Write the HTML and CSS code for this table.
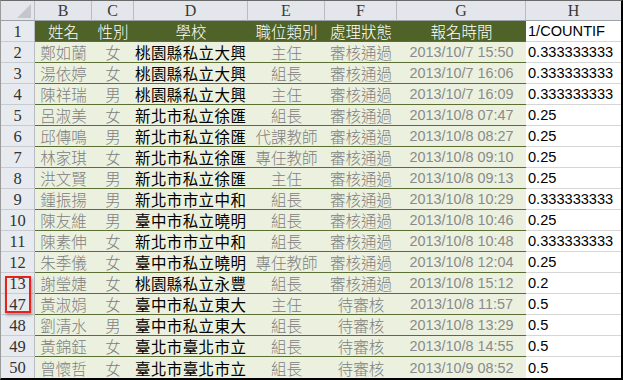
FILE: index.html
```html
<!DOCTYPE html>
<html>
<head>
<meta charset="utf-8">
<link rel="stylesheet" href="styles.css">
</head>
<body>
<div class="sheet">
  <div class="row colhdr">
    <div class="corner"><span class="tri"></span></div>
    <div class="ch">B</div><div class="ch">C</div><div class="ch">D</div><div class="ch">E</div><div class="ch">F</div><div class="ch">G</div><div class="ch">H</div>
  </div>
  <div class="row head">
    <div class="rh">1</div>
    <div class="c hd">姓名</div><div class="c hd">性別</div><div class="c hd">學校</div><div class="c hd">職位類別</div><div class="c hd">處理狀態</div><div class="c hd">報名時間</div><div class="c h">1/COUNTIF</div>
  </div>
  <div class="row"><div class="rh">2</div><div class="c g">鄭如蘭</div><div class="c g">女</div><div class="c s">桃園縣私立大興</div><div class="c g">主任</div><div class="c g">審核通過</div><div class="c d">2013/10/7 15:50</div><div class="c h">0.333333333</div></div>
  <div class="row"><div class="rh">3</div><div class="c g">湯依婷</div><div class="c g">女</div><div class="c s">桃園縣私立大興</div><div class="c g">組長</div><div class="c g">審核通過</div><div class="c d">2013/10/7 16:06</div><div class="c h">0.333333333</div></div>
  <div class="row"><div class="rh">4</div><div class="c g">陳祥瑞</div><div class="c g">男</div><div class="c s">桃園縣私立大興</div><div class="c g">主任</div><div class="c g">審核通過</div><div class="c d">2013/10/7 16:09</div><div class="c h">0.333333333</div></div>
  <div class="row"><div class="rh">5</div><div class="c g">呂淑美</div><div class="c g">女</div><div class="c s">新北市私立徐匯</div><div class="c g">組長</div><div class="c g">審核通過</div><div class="c d">2013/10/8 07:47</div><div class="c h">0.25</div></div>
  <div class="row"><div class="rh">6</div><div class="c g">邱傳鳴</div><div class="c g">男</div><div class="c s">新北市私立徐匯</div><div class="c g">代課教師</div><div class="c g">審核通過</div><div class="c d">2013/10/8 08:27</div><div class="c h">0.25</div></div>
  <div class="row"><div class="rh">7</div><div class="c g">林家琪</div><div class="c g">女</div><div class="c s">新北市私立徐匯</div><div class="c g">專任教師</div><div class="c g">審核通過</div><div class="c d">2013/10/8 09:10</div><div class="c h">0.25</div></div>
  <div class="row"><div class="rh">8</div><div class="c g">洪文賢</div><div class="c g">男</div><div class="c s">新北市私立徐匯</div><div class="c g">主任</div><div class="c g">審核通過</div><div class="c d">2013/10/8 09:13</div><div class="c h">0.25</div></div>
  <div class="row"><div class="rh">9</div><div class="c g">鍾振揚</div><div class="c g">男</div><div class="c s">新北市市立中和</div><div class="c g">組長</div><div class="c g">審核通過</div><div class="c d">2013/10/8 10:29</div><div class="c h">0.333333333</div></div>
  <div class="row"><div class="rh">10</div><div class="c g">陳友維</div><div class="c g">男</div><div class="c s">臺中市私立曉明</div><div class="c g">組長</div><div class="c g">審核通過</div><div class="c d">2013/10/8 10:46</div><div class="c h">0.25</div></div>
  <div class="row"><div class="rh">11</div><div class="c g">陳素伸</div><div class="c g">女</div><div class="c s">新北市市立中和</div><div class="c g">組長</div><div class="c g">審核通過</div><div class="c d">2013/10/8 10:48</div><div class="c h">0.333333333</div></div>
  <div class="row"><div class="rh">12</div><div class="c g">朱季儀</div><div class="c g">女</div><div class="c s">臺中市私立曉明</div><div class="c g">專任教師</div><div class="c g">審核通過</div><div class="c d">2013/10/8 12:04</div><div class="c h">0.25</div></div>
  <div class="row"><div class="rh">13</div><div class="c g">謝瑩婕</div><div class="c g">女</div><div class="c s">桃園縣私立永豐</div><div class="c g">組長</div><div class="c g">審核通過</div><div class="c d">2013/10/8 15:12</div><div class="c h">0.2</div></div>
  <div class="row"><div class="rh">47</div><div class="c g">黃淑娟</div><div class="c g">女</div><div class="c s">臺中市私立東大</div><div class="c g">主任</div><div class="c g">待審核</div><div class="c d">2013/10/8 11:57</div><div class="c h">0.5</div></div>
  <div class="row"><div class="rh">48</div><div class="c g">劉清水</div><div class="c g">男</div><div class="c s">臺中市私立東大</div><div class="c g">組長</div><div class="c g">待審核</div><div class="c d">2013/10/8 13:29</div><div class="c h">0.5</div></div>
  <div class="row"><div class="rh">49</div><div class="c g">黃錦鈺</div><div class="c g">女</div><div class="c s">臺北市臺北市立</div><div class="c g">組長</div><div class="c g">待審核</div><div class="c d">2013/10/8 14:55</div><div class="c h">0.5</div></div>
  <div class="row last"><div class="rh">50</div><div class="c g">曾懷哲</div><div class="c g">女</div><div class="c s">臺北市臺北市立</div><div class="c g">組長</div><div class="c g">待審核</div><div class="c d">2013/10/9 08:52</div><div class="c h">0.5</div></div>
  <div class="mark"></div>
</div>
</body>
</html>
```
FILE: styles.css
```css
html, body {
  margin: 0;
  padding: 0;
  background: #ffffff;
}
.sheet {
  position: relative;
  width: 623px;
  height: 380px;
  box-sizing: border-box;
  border-top: 1px solid #6b6b6b;
  border-left: 1px solid #9a9a9a;
  border-right: 2px solid #000000;
  border-bottom: 2px solid #000000;
  overflow: hidden;
  font-family: "Noto Sans CJK TC", "Noto Sans", sans-serif;
}
.row {
  display: grid;
  grid-template-columns: 34px 57px 42px 114px 77px 72px 129px 95px;
  height: 21px;
}
.colhdr {
  height: 20px;
}
.corner {
  position: relative;
  background: #e3e6ea;
  border-right: 1px solid #b9bdc3;
  border-bottom: 1px solid #9da2a8;
}
.tri {
  position: absolute;
  right: 3px;
  bottom: 2px;
  width: 0;
  height: 0;
  border-left: 14px solid transparent;
  border-bottom: 14px solid #c3c7cc;
}
.ch {
  display: flex;
  align-items: center;
  justify-content: center;
  background: #e3e6ea;
  border-right: 1px solid #b9bdc3;
  border-bottom: 1px solid #9da2a8;
  font-family: "Liberation Serif", serif;
  font-size: 16px;
  color: #3a3a3a;
  line-height: 18px;
}
.ch:last-child {
  border-right: none;
}
.rh {
  display: flex;
  align-items: center;
  justify-content: center;
  background: #e7eaee;
  border-right: 1px solid #b9bdc3;
  border-bottom: 1px solid #c8ccd1;
  font-family: "Liberation Serif", serif;
  font-size: 16.5px;
  color: #333333;
  line-height: 18px;
  padding-top: 1px;
}
.c {
  display: flex;
  align-items: center;
  justify-content: center;
  background: #ebf1de;
  border-bottom: 1px solid #5b6e33;
  font-size: 15.5px;
  font-weight: 300;
  line-height: 18px;
  white-space: nowrap;
  color: #808080;
}
.hd {
  background: #4f6228;
  color: #ffffff;
}
.s {
  justify-content: flex-start;
  padding-left: 1px;
  color: #000000;
  font-weight: 400;
  letter-spacing: 0.4px;
  overflow: hidden;
}
.d {
  font-family: "Liberation Sans", Arial, sans-serif;
  font-weight: 400;
  font-size: 14.4px;
  color: #8a8a8a;
}
.c.h {
  justify-content: flex-start;
  padding-left: 2px;
  background: #ffffff;
  border-bottom: 1px solid #d6d6d6;
  color: #000000;
  font-family: "Liberation Sans", Arial, sans-serif;
  font-weight: 400;
  font-size: 14.6px;
}
.last .c, .last .rh {
  border-bottom: none;
}
.mark {
  position: absolute;
  left: 4px;
  top: 275px;
  width: 22px;
  height: 33px;
  border: 2px solid #e8211c;
  box-shadow: 1px 2px 3px rgba(0, 0, 0, 0.35);
}
```
